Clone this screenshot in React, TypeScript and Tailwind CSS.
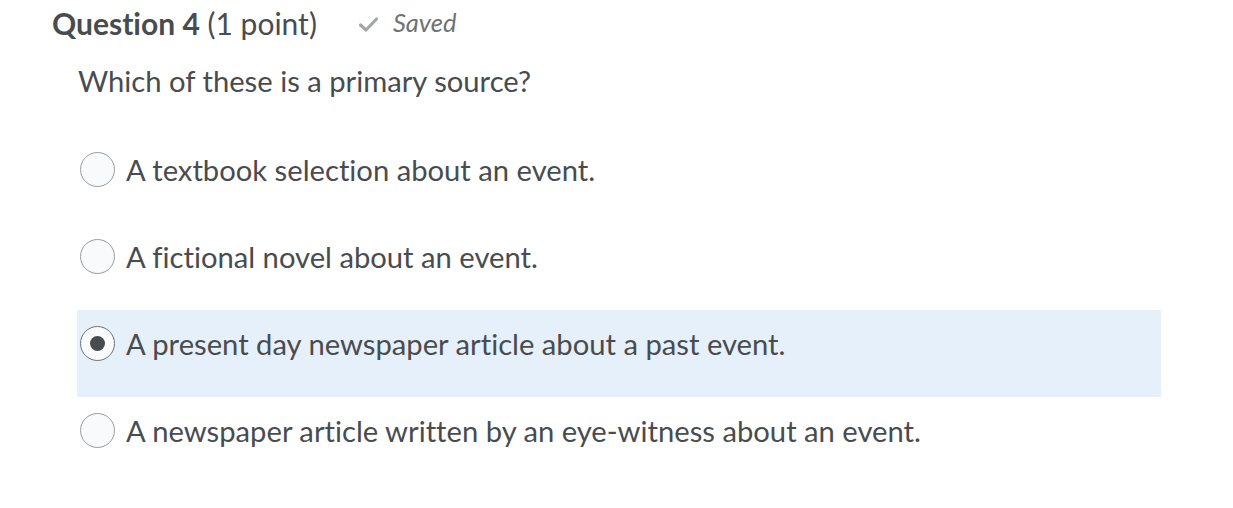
import React from "react";

const options = [
  { text: "A textbook selection about an event.", selected: false },
  { text: "A fictional novel about an event.", selected: false },
  { text: "A present day newspaper article about a past event.", selected: true },
  { text: "A newspaper article written by an eye-witness about an event.", selected: false },
];

function Radio({ selected }: { selected: boolean }) {
  return (
    <span
      className={`flex h-[35px] w-[35px] shrink-0 items-center justify-center rounded-full border bg-[#f9fafb] ${
        selected ? "border-[#6e7376]" : "border-[#9a9c9e]"
      }`}
    >
      {selected && <span className="h-[15px] w-[15px] rounded-full bg-[#494c4e]" />}
    </span>
  );
}

export default function App() {
  return (
    <div className="min-h-[508px] w-[1233px] bg-white font-['Lato','Noto_Sans',sans-serif] text-[#494c4e] [font-variant-ligatures:none]">
      <div className="flex h-[46px] items-center pl-[52px]">
        <span className="text-[30px] leading-none">
          <span className="font-bold">Question 4</span> (1 point)
        </span>
        <span className="ml-[41px] flex items-center text-[#6e7376]">
          <svg width="21" height="17" viewBox="0 0 21 17" className="mr-[14px] mt-[2px]">
            <path d="M2.5 9 L8 14 L18.5 3" fill="none" stroke="#a3a6a8" strokeWidth="3.2" strokeLinecap="round" strokeLinejoin="round" />
          </svg>
          <span className="text-[25.5px] italic leading-none">Saved</span>
        </span>
      </div>
      <div className="mt-[20px] pl-[78px] text-[29.2px] leading-none">Which of these is a primary source?</div>
      <div className="mt-[41px] ml-[77px] w-[1084px]">
        {options.map((o, i) => (
          <div
            key={i}
            className={`flex h-[87px] items-start pt-[16px] ${o.selected ? "bg-[#e6f0fa]" : ""}`}
          >
            <div className="flex items-center gap-[11px] pl-[3px]">
              <Radio selected={o.selected} />
              <span className="text-[29.2px] leading-none">{o.text}</span>
            </div>
          </div>
        ))}
      </div>
    </div>
  );
}
